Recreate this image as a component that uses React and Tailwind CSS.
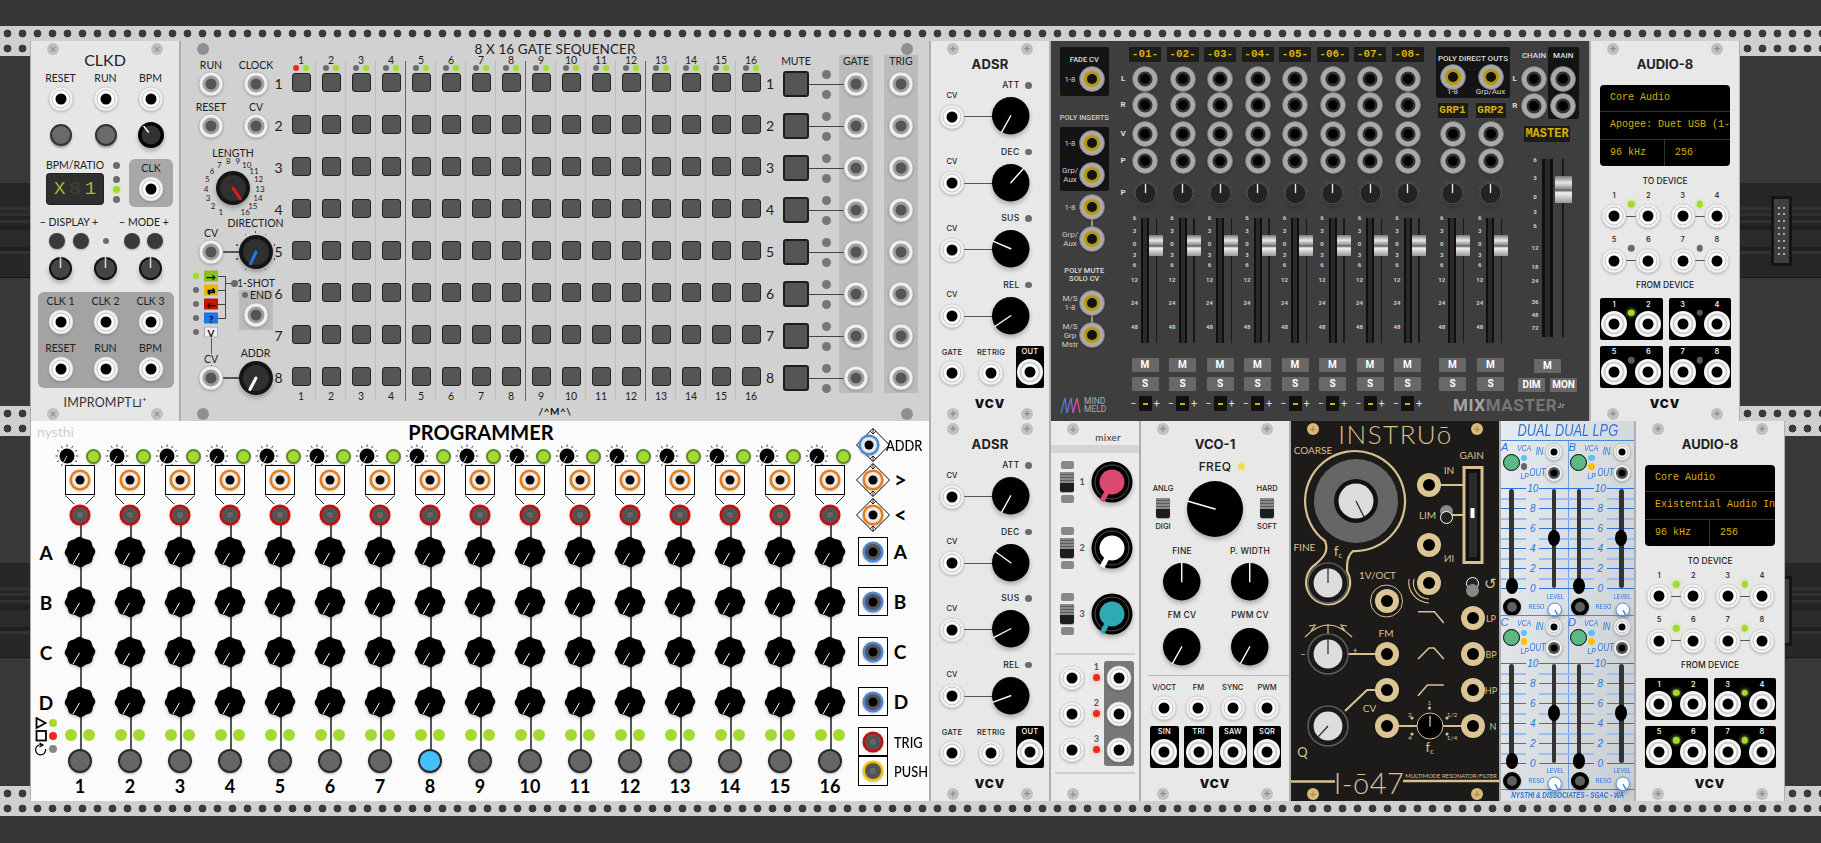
import React from 'react';

// Absolute helpers: only for panel artwork and controls with a free position on a faceplate.
const CENTER = 'absolute -translate-x-1/2 -translate-y-1/2';

const T = ({ x, y, className = '', children }) => (
  <div className={`${CENTER} whitespace-nowrap leading-none ${className}`} style={{ left: x, top: y }}>
    {children}
  </div>
);

const Box = ({ x, y, w, h, className = '', children }) => (
  <div className={`absolute ${className}`} style={{ left: x, top: y, width: w, height: h }}>
    {children}
  </div>
);

const L = ({ className = '', children }) => <span className={`whitespace-nowrap leading-none ${className}`}>{children}</span>;

const Dot = ({ x, y, d = 7, className = 'bg-[#6b6b6b]' }) => (
  <div
    className={`shrink-0 rounded-full ${x === undefined ? '' : 'absolute'} ${className}`}
    style={x === undefined ? { width: d, height: d } : { width: d, height: d, left: x - d / 2, top: y - d / 2 }}
  />
);

const JACKS = {
  vcv: [[12, '#f3f3f3', '#cdcdcd'], [9, '#fbfbfb', '#b5b5b5'], [5.5, '#000']],
  seq: [[12, '#f0f0f0', '#b5b5b5'], [8.5, '#a0a0a0'], [5.5, '#555']],
  out: [[13, '#f7f7f7'], [10.5, '#cfcfcf'], [8.5, '#fbfbfb'], [5.5, '#000']],
  mm: [[12.5, '#a9a9a9', '#777'], [7.5, '#333'], [5, '#000']],
  mmy: [[12.5, '#a9a9a9', '#777'], [8, '#b39a00'], [5, '#111']],
  orange: [[10.5, '#ec7c12'], [8, '#e8e8e8'], [4.5, '#000']],
  red: [[10.5, '#cc0a0a'], [8, '#555'], [4, '#666', '#444']],
  blue: [[10.5, '#4f86d6'], [8, '#555'], [4.5, '#000']],
  blueT: [[10.5, '#4f86d6'], [8, '#e8e8e8'], [4.5, '#000']],
  yellow: [[10.5, '#f2c200'], [8, '#555'], [4, '#666', '#444']],
  cream: [[12, '#dcc595'], [6, '#000']],
  lpg: [[8.5, '#f0f0f0', '#bbb'], [6, '#fafafa', '#aaa'], [3.5, '#000']],
  lpgOut: [[8.5, '#f0f0f0', '#bbb'], [6, '#555'], [3.5, '#000']],
  lpgBig: [[9, '#000'], [5, '#5e5e5e']],
};

const Jack = ({ x, y, type = 'vcv' }) => (
  <svg
    width="28"
    height="28"
    viewBox="-14 -14 28 28"
    className={`${x === undefined ? 'block shrink-0' : CENTER} drop-shadow-[0_1.5px_1px_rgba(0,0,0,0.22)]`}
    style={x === undefined ? undefined : { left: x, top: y }}
  >
    {JACKS[type].map(([r, fill, stroke], i) => (
      <circle key={i} r={r} fill={fill} stroke={stroke || 'none'} strokeWidth="0.8" />
    ))}
  </svg>
);

const polar = (r, deg) => [r * Math.sin((deg * Math.PI) / 180), -r * Math.cos((deg * Math.PI) / 180)];

// angle is clockwise from straight up
const Knob = ({ x, y, d = 38, angle = 0, fill = '#000', inner, rim, color = '#fff', w = 1.4, from = 0, to, children }) => {
  const r = d / 2;
  const [x1, y1] = polar(from, angle);
  const [x2, y2] = polar(to ?? r, angle);
  return (
    <svg
      width={d + 4}
      height={d + 4}
      viewBox={`${-r - 2} ${-r - 2} ${d + 4} ${d + 4}`}
      className={`${x === undefined ? 'block shrink-0' : CENTER} drop-shadow-[0_3px_2px_rgba(0,0,0,0.25)]`}
      style={x === undefined ? undefined : { left: x, top: y }}
    >
      <circle r={r} fill={fill} stroke={rim || 'none'} strokeWidth="1" />
      {inner && <circle r={inner[0]} fill={inner[1]} />}
      <line x1={x1} y1={y1} x2={x2} y2={y2} stroke={color} strokeWidth={w} strokeLinecap="round" />
      {children}
    </svg>
  );
};

const Screw = ({ mark = '+', tone = 'gray' }) => (
  <div className={`flex h-[12px] w-[12px] shrink-0 items-center justify-center rounded-full text-[11px] font-bold leading-none ${tone === 'gold' ? 'bg-[#d8ba78] text-[#a88a48]' : 'bg-[#c0c0c0] text-[#8f8f8f]'}`}>
    {mark}
  </div>
);

const ScrewRow = ({ mark, tone, children }) => (
  <div className="flex h-[15px] shrink-0 items-center justify-between px-[16px]">
    <Screw mark={mark} tone={tone} />
    {children}
    <Screw mark={mark} tone={tone} />
  </div>
);

// bottom of a faceplate: two screws with the maker's logo between them
const ModuleFoot = ({ mark, tone, children }) => (
  <div className="mt-auto flex h-[33px] shrink-0 items-end justify-between px-[16px] pb-[1.5px]">
    <Screw mark={mark} tone={tone} />
    {children}
    <Screw mark={mark} tone={tone} />
  </div>
);

const Toggle = () => (
  <div className="flex h-[20px] w-[14px] shrink-0 flex-col overflow-hidden rounded-[2px] bg-[#1d1d1d] shadow-[0_1px_1px_rgba(0,0,0,0.3)]">
    <div className="h-[11px] bg-[repeating-linear-gradient(#8a8a8a_0px,#8a8a8a_2px,#5a5a5a_2px,#5a5a5a_3px)]" />
  </div>
);

const Rail = ({ className = '' }) => (
  <div className={`h-[15px] shrink-0 bg-[#cfcfcf] bg-[radial-gradient(circle,#3a3a3a_3.6px,transparent_4.2px)] bg-[length:15px_15px] ${className}`} />
);

const STRIPES = [
  ['h-[24px]', 'bg-[#262626]'], ['h-[3px]', 'bg-[#313131]'], ['h-[3px]', 'bg-[#282828]'], ['h-[3px]', 'bg-[#303030]'],
  ['h-[4px]', 'bg-[#232323]'], ['h-[3px]', 'bg-[#303030]'], ['h-[3px]', 'bg-[#242424]'], ['h-[4px]', 'bg-[#1f1f1f]'],
  ['h-[18px]', 'bg-[#2a2a2a]'], ['h-[4px]', 'bg-[#1f1f1f]'], ['h-[3px]', 'bg-[#343434]'], ['h-[23px]', 'bg-[#272727]'],
];

// empty part of a rack row: rails and the dark backplane
const BlankSlot = ({ className = '', connector }) => (
  <div className={`relative flex flex-col overflow-hidden ${className}`}>
    <Rail />
    <div className="flex-1 bg-[#383838]">
      <div className="relative mt-[127px] flex h-[95px] flex-col border-b border-[#161616]">
        {STRIPES.map(([h, c], i) => (
          <div key={i} className={`${h} ${c}`} />
        ))}
        {connector && (
          <div className={`absolute top-[13px] grid h-[70px] w-[21px] grid-cols-2 content-evenly justify-items-center border-[3px] border-[#141414] bg-[#3f3f3f] p-[3px] ${connector}`}>
            {Array.from({ length: 16 }).map((_, i) => (
              <div key={i} className="h-[2px] w-[2px] bg-[#aaa]" />
            ))}
          </div>
        )}
      </div>
    </div>
    <Rail />
  </div>
);

const Module = ({ className, children }) => (
  <div className={`relative flex h-full shrink-0 flex-col overflow-hidden border-x border-[#aeaeae] ${className}`}>{children}</div>
);

const VcvLogo = () => <L className="mt-[10px] self-start text-[12px] font-black tracking-[1px] text-[#111]">VCV</L>;

const vcvFont = "font-['Inter',sans-serif]";

/* ---------- CLKD ---------- */
const Clkd = () => (
  <Module className="w-[150px] bg-[#e6e6e6] font-['Lato',sans-serif] text-[10.5px] text-[#222]">
    <ScrewRow mark="×" />
    <div className="flex h-[8px] items-center justify-center">
      <L className="text-[16px]">CLKD</L>
    </div>
    <div className="ml-[7px] mt-[7px] grid grid-cols-[repeat(3,45px)] grid-rows-[14px_28px_44px] place-items-center">
      {['RESET', 'RUN', 'BPM'].map((l) => (
        <L key={l}>{l}</L>
      ))}
      <Jack />
      <Jack />
      <Jack />
      <Dot d={22} className="border-2 border-[#333] bg-[#6a6a6a] shadow-[0_2px_2px_rgba(0,0,0,0.3)]" />
      <Dot d={22} className="border-2 border-[#333] bg-[#6a6a6a] shadow-[0_2px_2px_rgba(0,0,0,0.3)]" />
      <Knob d={26} angle={-40} inner={[9.5, '#333']} from={4} to={11} w={1.5} />
    </div>
    <div className="flex h-[54px] pl-[16px]">
      <div className="flex w-[56px] flex-col">
        <div className="flex h-[16px] items-center justify-center">
          <L>BPM/RATIO</L>
        </div>
        <div className="mt-px flex h-[30px] items-center justify-center gap-[4px] rounded-[3px] bg-[#2f2f2f] font-['Liberation_Mono',monospace] text-[19px] leading-none text-[#a0b92c] shadow-[0_0_0_1px_#222]">
          <span>X</span>
          <span className="text-[#40442e]">8</span>
          <span>1</span>
        </div>
      </div>
      <div className="ml-[10px] mt-[4.5px] flex flex-col gap-[3px]">
        <Dot className="mb-[4px] bg-[#6b6b6b]" />
        <Dot />
        <Dot className="bg-[#a4d92f] shadow-[0_0_4px_#bce25a]" />
        <Dot />
      </div>
      <div className="ml-[9px] mt-[2px] grid h-[48px] w-[44px] grid-rows-[18px_24px] place-items-center rounded-[6px] bg-[#a8a8a8]">
        <L>CLK</L>
        <Jack />
      </div>
    </div>
    <div className="grid h-[22px] grid-cols-[76px_74px] place-items-center">
      <L>− DISPLAY +</L>
      <L>− MODE +</L>
    </div>
    <div className="ml-[13.7px] grid h-[12px] grid-cols-[24px_24px_26px_26px_20.6px] place-items-center">
      <Dot d={16} className="bg-[#3a3a3a] shadow-[0_1px_2px_rgba(0,0,0,0.3)]" />
      <Dot d={16} className="bg-[#3a3a3a] shadow-[0_1px_2px_rgba(0,0,0,0.3)]" />
      <Dot d={6} />
      <Dot d={16} className="bg-[#3a3a3a] shadow-[0_1px_2px_rgba(0,0,0,0.3)]" />
      <Dot d={16} className="bg-[#3a3a3a] shadow-[0_1px_2px_rgba(0,0,0,0.3)]" />
    </div>
    <div className="ml-[7px] grid h-[46px] grid-cols-[repeat(3,45px)] place-items-center">
      {[0, 1, 2].map((i) => (
        <Knob key={i} d={23} fill="#111" inner={[9.5, '#454545']} color="#d5d5d5" from={1} to={11} w={1.6} />
      ))}
    </div>
    <div className="ml-[7px] mt-px grid h-[96px] w-[136px] grid-cols-[repeat(3,45px)] grid-rows-[18px_24px_28px_14px] place-items-center rounded-[6px] bg-[#a3a3a3]">
      {['CLK 1', 'CLK 2', 'CLK 3'].map((l) => (
        <L key={l}>{l}</L>
      ))}
      <Jack />
      <Jack />
      <Jack />
      {['RESET', 'RUN', 'BPM'].map((l) => (
        <L key={l}>{l}</L>
      ))}
      <Jack />
      <Jack />
      <Jack />
    </div>
    <ModuleFoot mark="×">
      <L className="mt-[9px] self-start text-[12.5px] tracking-[0.2px] text-[#333]">IMPROMPT⊔⁺</L>
    </ModuleFoot>
  </Module>
);

/* ---------- 8 x 16 gate sequencer ---------- */
const STEPS = Array.from({ length: 16 }, (_, i) => i);
const EIGHT = Array.from({ length: 8 }, (_, i) => i);

const SeqKnob = ({ x, y, angle, color, ticks }) => (
  <>
    <Knob x={x} y={y} d={34} fill="#151515" inner={[13, '#303030']} color={color} w={3} to={13} angle={angle} />
    {ticks &&
      [-150, -110, -70, -30, 0, 30, 70, 110, 150].map((a) => {
        const [px, py] = polar(20, a);
        return <Dot key={a} x={x + px} y={y + py} d={1.5} className="bg-[#333]" />;
      })}
  </>
);

const StepColumn = ({ i }) => (
  <div className="relative flex w-[30px] flex-col items-center">
    {i < 15 && <div className={`absolute right-0 top-[6px] bottom-0 ${(i + 1) % 4 === 0 ? 'w-[1.5px] bg-[#666]' : 'w-px bg-[#bdbdbd]'}`} />}
    <div className="flex h-[12px] items-center">
      <L className="text-[10.5px]">{i + 1}</L>
    </div>
    <div className="flex h-[4px] items-center gap-[4px]">
      <Dot d={6} className={i === 0 ? 'bg-[#f0291c]' : 'bg-[#6b6b6b]'} />
      <Dot d={6} className="bg-[#a4d92f] shadow-[0_0_3px_#c5e86d]" />
    </div>
    <div className="mt-[3.5px] flex flex-col gap-[23px]">
      {EIGHT.map((r) => (
        <div key={r} className="h-[19px] w-[19px] rounded-[3px] border-[1.5px] border-[#222] bg-[#555]" />
      ))}
    </div>
    <L className="mt-[5px] text-[10.5px]">{i + 1}</L>
  </div>
);

const SeqRows = ({ className = '', children }) => (
  <div className={`grid grid-rows-[repeat(8,42px)] place-items-center ${className}`}>{EIGHT.map(children)}</div>
);

const DIR_BUTTONS = [
  ['→', 'bg-[#8fbc1f] text-black'],
  ['⇄', 'bg-[#e6b800] text-black'],
  ['←', 'bg-[#c41500] text-black'],
  ['?', 'bg-[#1f74e8] text-black'],
  ['V', 'bg-[#f0f0f0] text-[#222] border border-[#aaa]'],
];

const SeqLeftPanel = () => (
  <div className="relative w-[90px] shrink-0 text-[10.5px]">
    <div className="ml-[7.5px] mt-[3px] grid grid-cols-[repeat(2,45px)] grid-rows-[14px_24px_22px_16px] place-items-center">
      <L>RUN</L>
      <L>CLOCK</L>
      <Jack type="seq" />
      <Jack type="seq" />
      <L>RESET</L>
      <L>CV</L>
      <Jack type="seq" />
      <Jack type="seq" />
    </div>
    {/* dials and the direction selector sit freely on the panel; coordinates are from the module's top */}
    <div className="absolute -top-[14px] left-0">
      <T x={52} y={112}>LENGTH</T>
      {STEPS.map((i) => {
        const [px, py] = polar(27, 207 + i * 20.4);
        return <T key={i} x={52 + px} y={147 + py} className="text-[8px]">{i + 1}</T>;
      })}
      <SeqKnob x={52} y={147} angle={146} color="#e81b12" />
      <Box x={30} y={210.3} w={44} h={1.5} className="bg-[#555]" />
      <T x={74.6} y={182}>DIRECTION</T>
      <T x={30} y={192}>CV</T>
      <Jack x={30} y={211} type="seq" />
      <SeqKnob x={74.6} y={211} angle={205} color="#1f74e8" ticks />
      <Box x={30} y={234.5} w={15} h={43} className="border-r-[1.5px] border-[#444]" />
      {[235, 249, 263, 277].map((y) => (
        <Box key={y} x={30} y={y - 0.5} w={15} h={1.5} className="bg-[#444]" />
      ))}
      <Box x={45} y={241.5} w={8} h={1.5} className="bg-[#444]" />
      <Dot x={53} y={242} d={7} />
      <T x={75} y={242}>1-SHOT</T>
      {DIR_BUTTONS.map(([g, c], i) => (
        <React.Fragment key={g}>
          <Dot x={15} y={235 + 14 * i} d={6} className={i === 0 ? 'bg-[#a4d92f] shadow-[0_0_4px_#bce25a]' : 'bg-[#6b6b6b]'} />
          <T x={30} y={235 + 14 * i} className={`flex h-[11px] w-[14px] items-center justify-center text-[10px] font-bold ${c}`}>{g}</T>
        </React.Fragment>
      ))}
      <Box x={58} y={249} w={34} h={40} className="bg-[#bbb]" />
      <Dot x={64} y={254} d={6} />
      <T x={80} y={254}>END</T>
      <Jack x={74.6} y={274} type="seq" />
      <Box x={29.5} y={297} w={1.5} h={30} className="bg-[#555]" />
      <T x={30} y={318} className="bg-[#d1d1d1]">CV</T>
      <Box x={30} y={336.3} w={44} h={1.5} className="bg-[#555]" />
      <Jack x={30} y={337} type="seq" />
      <T x={74.6} y={312}>ADDR</T>
      <SeqKnob x={74.6} y={337} angle={208} color="#fff" />
    </div>
  </div>
);

const OutColumn = ({ label, className }) => (
  <div className={`flex w-[34px] flex-col items-center self-start bg-[#bbb] ${className}`}>
    <div className="h-[8px]">
      <L className="mt-[1px] block text-[10.5px]">{label}</L>
    </div>
    <div className="h-[330px]">
      <SeqRows>
        {(r) => <Jack key={r} type="seq" />}
      </SeqRows>
    </div>
  </div>
);

const Sequencer = () => (
  <Module className="w-[750px] bg-[#d1d1d1] font-['Lato',sans-serif] text-[#222]">
    <div className="flex h-[15px] shrink-0 items-center justify-between px-[16px]">
      <Dot d={12} className="bg-[#8f8f8f]" />
      <L className="mt-[3px] text-[13.5px] tracking-[0.1px]">8 X 16 GATE SEQUENCER</L>
      <Dot d={12} className="bg-[#8f8f8f]" />
    </div>
    <div className="-mt-px flex h-[346px]">
      <SeqLeftPanel />
      <SeqRows className="mt-[8px] w-[15px] !place-items-[center_end]">
        {(r) => <L key={r} className="text-[14px]">{r + 1}</L>}
      </SeqRows>
      {STEPS.map((i) => (
        <StepColumn key={i} i={i} />
      ))}
      <SeqRows className="mt-[8px] w-[8px]">
        {(r) => <L key={r} className="text-[14px]">{r + 1}</L>}
      </SeqRows>
      <div className="w-[44px]">
        <div className="flex h-[8px] justify-center">
          <L className="mt-px text-[10.5px]">MUTE</L>
        </div>
        <SeqRows>
          {(r) => (
            <div key={r} className="relative h-[26px] w-[26px] rounded-[3px] border-2 border-[#1e1e1e] bg-[#555]">
              <div className="absolute left-[24px] top-[10.5px] h-[1.5px] w-[35px] bg-[#444]" />
            </div>
          )}
        </SeqRows>
      </div>
      <SeqRows className="mt-[8px] w-[16px]">
        {(r) => (
          <div key={r} className="flex flex-col gap-[11px]">
            <Dot d={9} className="bg-[#777]" />
            <Dot d={9} className="bg-[#777]" />
          </div>
        )}
      </SeqRows>
      <OutColumn label="GATE" className="ml-[5px]" />
      <OutColumn label="TRIG" className="ml-[11px]" />
    </div>
    <div className="flex h-[20px] items-end justify-between px-[16px] pb-[1.5px]">
      <Dot d={12} className="bg-[#8f8f8f]" />
      <L className="self-start mt-[5px] text-[10px] font-bold tracking-[0.5px] text-[#111]">/^M^\</L>
      <Dot d={12} className="bg-[#8f8f8f]" />
    </div>
  </Module>
);

/* ---------- ADSR ---------- */
const PortTile = ({ label }) => (
  <div className="grid h-[42px] grid-rows-[12px_28px] place-items-center rounded-[2px] bg-black text-white">
    <L className="text-[7.5px] font-medium tracking-[0.2px]">{label}</L>
    <Jack type="out" />
  </div>
);

const PortCell = ({ label, className = '' }) => (
  <div className={`grid grid-rows-[13px_28px] place-items-center ${className}`}>
    <L className="text-[7.5px] font-medium tracking-[0.2px]">{label}</L>
    <Jack />
  </div>
);

const Adsr = ({ angles }) => (
  <Module className={`w-[120px] bg-[#e8e8e8] text-[#222] ${vcvFont}`}>
    <ScrewRow />
    <div className="flex h-[18px] items-center justify-center">
      <L className="text-[13px] font-bold tracking-[0.2px]">ADSR</L>
    </div>
    <div className="mt-[2px] flex flex-col">
      {['ATT', 'DEC', 'SUS', 'REL'].map((l, i) => (
        <div key={l} className="relative flex h-[66.5px]">
          <div className="absolute left-[33px] top-[40.5px] h-px w-[30px] bg-[#555]" />
          <div className="grid w-[42px] grid-rows-[14px_28px] place-items-center pt-[13px]">
            <L className="text-[7.5px] font-medium">CV</L>
            <Jack />
          </div>
          <div className="grid w-[77px] grid-rows-[20px_41px]">
            <div className="flex items-center justify-end gap-[5.5px] pr-[17.5px]">
              <L className="text-[8.5px] font-medium tracking-[0.3px]">{l}</L>
              <Dot d={6.5} />
            </div>
            <div className="flex items-center justify-center">
              <Knob d={37.5} angle={angles[i]} />
            </div>
          </div>
        </div>
      ))}
    </div>
    <div className="flex pt-[4.5px]">
      <PortCell label="GATE" className="w-[42px]" />
      <PortCell label="RETRIG" className="w-[36px]" />
      <div className="ml-[7px] w-[28px]">
        <PortTile label="OUT" />
      </div>
    </div>
    <ModuleFoot>
      <VcvLogo />
    </ModuleFoot>
  </Module>
);

/* ---------- MixMaster Jr ---------- */
const CHANNELS = ['-01-', '-02-', '-03-', '-04-', '-05-', '-06-', '-07-', '-08-'];
const DB = [['6', 0], ['3', 13], ['0', 26], ['3', 37], ['6', 47], ['12', 62], ['24', 85], ['48', 109]];
const MASTER_DB = [['6', 1], ['3', 19], ['0', 38], ['3', 53], ['6', 67], ['12', 89], ['18', 108], ['24', 122], ['36', 143], ['48', 156], ['72', 169]];
const HANDLE = 'bg-[linear-gradient(#777,#e8e8e8_25%,#8a8a8a_48%,#555_52%,#f2f2f2_62%,#999)]';
const LCD = "flex items-center justify-center rounded-[1px] bg-[#1c1c1c] font-['Liberation_Mono',monospace] font-bold text-[#d8b100]";

const Fader = () => (
  <div className="relative h-[125px] w-full">
    <div className="absolute left-[14.75px] top-0 h-full w-[8px] border-x-[2.5px] border-[#0f0f0f] bg-[#2a2a2a]" />
    <div className="absolute left-[29.25px] top-0 h-full w-[1.5px] bg-[#1a1a1a]" />
    {DB.map(([l, y], i) => (
      <T key={i} x={8.25} y={y} className="text-[6px] font-bold text-[#cfcfcf]">{l}</T>
    ))}
    <div className={`absolute left-[22.75px] top-[17px] h-[21px] w-[14px] rounded-[1px] ${HANDLE}`} />
  </div>
);

const MmBtn = ({ children, className = '' }) => (
  <div className={`flex h-[14px] w-[27px] shrink-0 items-center justify-center rounded-[1px] bg-[#686868] text-[10px] font-bold leading-none text-white ${className}`}>
    {children}
  </div>
);

const Pan = () => (
  <Knob d={21} fill="#232323" rim="#555" color="#e8e8e8" w={1.4} from={1} to={9}>
    <circle r="12.5" fill="none" stroke="#777" strokeWidth="1" strokeDasharray="0.8 2" />
  </Knob>
);

const StripLower = () => (
  <>
    <Fader />
    <MmBtn className="mt-[15.3px]">M</MmBtn>
    <MmBtn className="mt-[4.7px]">S</MmBtn>
  </>
);

const ChannelStrip = ({ label }) => (
  <div className="flex w-[37.5px] flex-col items-center pt-[6px]">
    <div className={`h-[15px] w-[32px] text-[11px] ${LCD}`}>{label}</div>
    <div className="grid w-full grid-rows-[33.4px_19.8px_37.6px_15.8px_49.4px] place-items-center">
      <Jack type="mm" />
      <Jack type="mm" />
      <Jack type="mm" />
      <Jack type="mm" />
      <Pan />
    </div>
    <StripLower />
    <div className="mt-[5.5px] flex items-center gap-[2px] text-[11px] leading-none">
      <span>−</span>
      <div className="flex h-[15px] w-[13px] items-center justify-center rounded-[1px] bg-[#111]">
        <div className="h-[2px] w-[5px] bg-[#d8b100]" />
      </div>
      <span>+</span>
    </div>
  </div>
);

const GroupStrip = ({ label }) => (
  <div className="flex w-[38px] flex-col items-center">
    <div className={`h-[15px] w-[30px] text-[11px] ${LCD}`}>{label}</div>
    <div className="grid w-full grid-rows-[32px_21.4px_44.6px] place-items-center">
      <Jack type="mm" />
      <Jack type="mm" />
      <Pan />
    </div>
    <div className="mt-[2px] flex w-full flex-col items-center">
      <StripLower />
    </div>
  </div>
);

const PortRow = ({ label, label2, label3, type = 'mmy' }) => (
  <div className="grid h-[32px] grid-cols-[20px_23px] place-items-center text-center text-[8px] leading-[9px] text-[#cfcfcf]">
    <div>
      {label}
      {label2 && <br />}
      {label2}
      {label3 && <br />}
      {label3}
    </div>
    <Jack type={type} />
  </div>
);

const MixLeftColumn = () => (
  <div className="flex w-[62px] shrink-0 flex-col pl-[9px]">
    <div className="mt-[6px] h-[49px] w-[48.5px] rounded-[2px] bg-[#141414]">
      <div className="flex h-[16px] items-end justify-center">
        <L className="text-[7.5px] font-medium">FADE CV</L>
      </div>
      <PortRow label="1-8" />
    </div>
    <div className="flex h-[31px] w-[48.5px] items-end justify-center pb-[6px]">
      <L className="text-[7.5px] font-medium text-[#ccc]">POLY INSERTS</L>
    </div>
    <div className="h-[64px] w-[48.5px] rounded-[2px] bg-[#141414]">
      <PortRow label="1-8" />
      <PortRow label="Grp/" label2="Aux" />
    </div>
    <div className="relative">
      <div className="absolute left-[31px] top-[16px] h-[32px] w-[1.5px] bg-[#999]" />
      <PortRow label="1-8" />
      <PortRow label="Grp/" label2="Aux" />
    </div>
    <div className="flex h-[32px] w-[48.5px] items-center justify-center pt-[8px] text-center text-[7.5px] font-medium leading-[8.5px]">
      POLY MUTE
      <br />
      SOLO CV
    </div>
    <div className="relative">
      <div className="absolute left-[31px] top-[16px] h-[32px] w-[1.5px] bg-[#999]" />
      <PortRow label="M/S" label2="1-8" />
      <PortRow label="M/S" label2="Grp" label3="Mstr" />
    </div>
    <div className="mt-[46px] flex items-center gap-[2px]">
      <svg width="22" height="16" viewBox="0 0 22 16" fill="none" strokeWidth="1.3" className="shrink-0">
        <path d="M1 16 L5 1 L7 16" stroke="#4a7fe0" />
        <path d="M7 16 L11 1 L13 16" stroke="#8a5fd8" />
        <path d="M13 16 L17 1 L20 16" stroke="#e0508c" />
      </svg>
      <div className="text-[8.5px] leading-[8px] text-[#aaa]">
        MIND
        <br />
        MELD
      </div>
    </div>
  </div>
);

const MixMaster = () => (
  <Module className="w-[540px] !flex-row border-[#555] bg-[#3e3e3e] font-['Roboto',sans-serif] text-[#ddd]">
    <MixLeftColumn />
    <div className="w-[13.25px] shrink-0 pl-[7px] pt-[21px]">
      <div className="grid grid-rows-[33.4px_19.8px_37.6px_15.8px_49.4px] place-items-center text-[8px] font-bold">
        {['L', 'R', 'V', 'P', 'P'].map((l, i) => (
          <L key={i}>{l}</L>
        ))}
      </div>
    </div>
    {CHANNELS.map((c) => (
      <ChannelStrip key={c} label={c} />
    ))}
    <div className="ml-[7.25px] flex w-[76px] shrink-0 flex-col pt-[6px]">
      <div className="ml-[2.5px] grid h-[51px] w-[74px] grid-rows-[16px_24px_10px] rounded-[2px] bg-[#141414]">
        <div className="flex items-end justify-center">
          <L className="text-[8px] font-medium">POLY DIRECT OUTS</L>
        </div>
        <div className="-ml-[2.5px] grid grid-cols-[38px_38px] place-items-center">
          <Jack type="mmy" />
          <Jack type="mmy" />
        </div>
        <div className="-ml-[2.5px] grid grid-cols-[38px_38px] place-items-center text-[8px]">
          <L>1-8</L>
          <L>Grp/Aux</L>
        </div>
      </div>
      <div className="mt-[5px] flex">
        <GroupStrip label="GRP1" />
        <GroupStrip label="GRP2" />
      </div>
    </div>
    <div className="flex w-[70px] shrink-0 flex-col pt-[6px]">
      <div className="flex">
        <div className="grid w-[10.5px] grid-rows-[18px_27.7px_26.6px] place-items-center text-[8px] font-bold">
          <span />
          <L>L</L>
          <L>R</L>
        </div>
        <div className="grid w-[20px] grid-rows-[18px_27.7px_26.6px] place-items-center">
          <L className="text-[8px] font-medium">CHAIN</L>
          <Jack type="mm" />
          <Jack type="mm" />
        </div>
        <div className="ml-[7.5px] grid h-[72px] w-[31.5px] grid-rows-[18px_27.7px_26.6px] place-items-center rounded-[2px] bg-[#141414]">
          <L className="text-[8px] font-medium">MAIN</L>
          <Jack type="mm" />
          <Jack type="mm" />
        </div>
      </div>
      <div className={`ml-[14.5px] mt-[6.7px] h-[16px] w-[46px] text-[12px] ${LCD}`}>MASTER</div>
      <div className="relative mt-[17px] h-[178px]">
        <div className="absolute left-[32.5px] top-0 h-full w-[11px] border-x-[3px] border-[#0f0f0f] bg-[#2a2a2a]" />
        <div className="absolute left-[52.5px] top-0 h-full w-[1.5px] bg-[#1a1a1a]" />
        {MASTER_DB.map(([l, y], i) => (
          <T key={i} x={25.5} y={y} className="text-[6px] font-bold text-[#cfcfcf]">{l}</T>
        ))}
        <div className={`absolute left-[45px] top-[17px] h-[27px] w-[17px] rounded-[1px] ${HANDLE}`} />
      </div>
      <MmBtn className="ml-[24.5px] mt-[22px]">M</MmBtn>
      <div className="ml-[8.5px] mt-[4.7px] flex gap-[5px]">
        <MmBtn>DIM</MmBtn>
        <MmBtn>MON</MmBtn>
      </div>
    </div>
    <T x={458} y={364} className="text-[17px] font-bold tracking-[0.6px] text-[#777]">
      <span className="text-[#a5a5a5]">MIX</span>MASTER<sup className="text-[7px] text-[#a5a5a5]">Jr</sup>
    </T>
  </Module>
);

/* ---------- AUDIO-8 ---------- */
const LED_ON = 'bg-[#a4d92f] shadow-[0_0_4px_#bce25a]';

const ToPair = ({ a, on }) => (
  <div className="relative grid grid-cols-[34.3px_34.3px] grid-rows-[13.4px_28px] justify-center justify-items-center items-center">
    <div className="absolute left-1/2 top-[15px] -translate-x-1/2 -translate-y-1/2">
      <Dot d={6.5} className={on ? LED_ON : 'bg-[#6b6b6b]'} />
    </div>
    <div className="absolute left-[26px] top-[27px] h-px w-[11px] bg-[#555]" />
    <L className="text-[7.5px] font-medium">{a}</L>
    <L className="text-[7.5px] font-medium">{a + 1}</L>
    <Jack />
    <Jack />
  </div>
);

const FromPair = ({ a, on }) => (
  <div className="relative grid h-[42px] grid-cols-[34.3px_34.3px] grid-rows-[12px_28px] content-start justify-center justify-items-center items-center rounded-[2px] bg-black text-white">
    <div className="absolute left-1/2 top-[14.3px] -translate-x-1/2 -translate-y-1/2">
      <Dot d={6.5} className={on ? LED_ON : 'bg-[#5a5a5a]'} />
    </div>
    <L className="text-[7.5px] font-medium">{a}</L>
    <L className="text-[7.5px] font-medium">{a + 1}</L>
    <Jack type="out" />
    <Jack type="out" />
  </div>
);

const Audio8 = ({ device, toOn, fromOn }) => (
  <Module className={`w-[150px] bg-[#e8e8e8] text-[#222] ${vcvFont}`}>
    <ScrewRow />
    <div className="flex h-[18px] items-center justify-center">
      <L className="text-[13px] font-bold">AUDIO-8</L>
    </div>
    <div className="mx-[9px] mt-[11px] grid h-[82px] grid-rows-[27px_28px_27px] overflow-hidden rounded-[4px] bg-black font-['Liberation_Mono',monospace] text-[10px] leading-none text-[#d8ae00]">
      <div className="flex items-center whitespace-nowrap border-b border-[#333] pl-[10px]">Core Audio</div>
      <div className="flex items-center whitespace-nowrap border-b border-[#333] pl-[10px]">{device}</div>
      <div className="grid grid-cols-[65px_65px]">
        <div className="flex items-center border-r border-[#333] pl-[10px]">96 kHz</div>
        <div className="flex items-center pl-[10px]">256</div>
      </div>
    </div>
    <div className="mt-[8px] flex h-[15px] items-center justify-center">
      <L className="text-[8.5px] font-medium">TO DEVICE</L>
    </div>
    <div className="grid grid-cols-[62.5px_62.5px] gap-x-[6px] gap-y-[2.8px] px-[9px]">
      {[1, 3, 5, 7].map((a, i) => (
        <ToPair key={a} a={a} on={toOn.includes(i)} />
      ))}
    </div>
    <div className="mt-[3.8px] flex h-[14px] items-center justify-center">
      <L className="text-[8.5px] font-medium">FROM DEVICE</L>
    </div>
    <div className="mt-[6px] grid grid-cols-[62.5px_62.5px] gap-x-[6px] gap-y-[5.7px] px-[9px]">
      {[1, 3, 5, 7].map((a, i) => (
        <FromPair key={a} a={a} on={fromOn.includes(i)} />
      ))}
    </div>
    <ModuleFoot>
      <VcvLogo />
    </ModuleFoot>
  </Module>
);

/* ---------- Nysthi programmer ---------- */
const SCALLOP = Array.from({ length: 96 }, (_, i) => {
  const a = (i / 96) * Math.PI * 2;
  const r = 14.6 + 0.7 * Math.cos(a * 8 + 0.4);
  return `${(r * Math.sin(a)).toFixed(2)},${(-r * Math.cos(a)).toFixed(2)}`;
}).join(' ');

const Scallop = () => {
  const [px, py] = polar(14, 210);
  const [qx, qy] = polar(1, 210);
  return (
    <svg width="32" height="32" viewBox="-16 -16 32 32" className="block drop-shadow-[0_2px_1.5px_rgba(0,0,0,0.2)]">
      <polygon points={SCALLOP} fill="#000" />
      <line x1={qx} y1={qy} x2={px} y2={py} stroke="#fff" strokeWidth="1" />
    </svg>
  );
};

const TickKnob = () => (
  <svg width="26" height="26" viewBox="-13 -13 26 26" className="block">
    {[-150, -120, -90, -60, -30, 0, 30, 60, 90, 120, 150].map((a) => {
      const [x1, y1] = polar(9, a);
      const [x2, y2] = polar(11.5, a);
      return <line key={a} x1={x1} y1={y1} x2={x2} y2={y2} stroke="#333" strokeWidth="0.9" />;
    })}
    <circle r="7.5" fill="#000" />
    <line x1="0" y1="0" x2="-3.6" y2="6.4" stroke="#fff" strokeWidth="0.8" />
  </svg>
);

const Framed = ({ type }) => (
  <div className="flex h-[29.5px] w-[29.5px] shrink-0 items-center justify-center border border-black bg-white">
    <Jack type={type} />
  </div>
);

const Diamond = ({ type }) => (
  <div className="relative flex h-[35px] w-[36px] items-center justify-center">
    <svg width="36" height="36" viewBox="-18 -18 36 36" className="absolute left-0 top-0">
      <polygon points="0,-16.5 16.5,0 0,16.5 -16.5,0" fill="#fff" stroke="#000" strokeWidth="1" />
      <path d="M0 -16.5 V-11 M0 16.5 V11 M-3 -14 L0 -11 L3 -14 M-3 14 L0 11 L3 14" stroke="#000" strokeWidth="0.8" fill="none" />
    </svg>
    <div className="relative">
      <Jack type={type} />
    </div>
  </div>
);

const ProgramStep = ({ i }) => (
  <div className="relative isolate flex w-[50px] flex-col items-center">
    <div className="absolute left-1/2 top-[72px] -z-10 h-[246px] w-[1.5px] bg-[#555]" />
    <div className="grid h-[22px] grid-cols-[26px_26px] place-items-center">
      <TickKnob />
      <Dot d={15} className="border-2 border-[#5b8a2a] bg-[#a4d92f] shadow-[0_1px_2px_rgba(0,0,0,0.25)]" />
    </div>
    <div className="mt-[0.3px]">
      <Framed type="orange" />
    </div>
    <svg width="30" height="10" viewBox="0 0 30 10" className="block shrink-0">
      <path d="M0.5 0.5 L9 9 M29.5 0.5 L21 9" stroke="#111" strokeWidth="0.9" fill="none" />
    </svg>
    <div className="flex h-[20.4px] items-center">
      <Jack type="red" />
    </div>
    <div className="mt-[1.8px] grid grid-rows-[repeat(4,50px)] place-items-center">
      <Scallop />
      <Scallop />
      <Scallop />
      <Scallop />
    </div>
    <div className="flex h-[15.4px] items-center gap-[6px]">
      <Dot d={12} className="bg-[#a4d92f]" />
      <Dot d={12} className="bg-[#a4d92f]" />
    </div>
    <div className="flex h-[37.2px] items-center">
      <Dot d={24} className={`border-[2.5px] border-[#2a2a2a] shadow-[0_1px_2px_rgba(0,0,0,0.3)] ${i === 7 ? 'bg-[#45c0ff]' : 'bg-[#666]'}`} />
    </div>
    <div className="flex h-[12px] items-center">
      <L className="text-[18px] font-bold">{i + 1}</L>
    </div>
  </div>
);

const NARROW_LABEL = 'origin-left scale-x-[0.8] text-[16px] font-medium';

const Programmer = () => (
  <Module className="w-[900px] !flex-row bg-[#fbfbfb] font-['Lato',sans-serif] text-black">
    <div className="w-[824px] shrink-0">
      <div className="grid h-[22px] grid-cols-[1fr_auto_1fr] items-center pl-[76px]">
        <L className="-ml-[70px] text-[14px] text-[#d0d0d0]">nysthi</L>
        <L className="text-[20px] font-bold tracking-[0.1px]">PROGRAMMER</L>
      </div>
      <div className="flex">
        <div className="w-[24px] shrink-0 pt-[84px]">
          <div className="grid grid-rows-[repeat(4,50px)] place-items-center text-[19px] font-bold">
            {['A', 'B', 'C', 'D'].map((l) => (
              <L key={l} className="ml-[6px]">{l}</L>
            ))}
          </div>
          <div className="-mt-[10px] flex gap-[1px] pl-[4px]">
            <svg width="13" height="40" viewBox="0 0 13 40" fill="none" stroke="#000" strokeWidth="1.8" className="block shrink-0">
              <path d="M1.5 1 L10.5 6 L1.5 11 Z" />
              <rect x="1.5" y="14" width="9.5" height="9.5" />
              <path d="M10.5 32 A5 5 0 1 1 7 28 M4.5 26 L8 28 L4.5 30" strokeWidth="1.2" />
            </svg>
            <div className="flex flex-col gap-[5px] pt-[1.7px]">
              <Dot d={8} className="bg-[#a4d92f]" />
              <Dot d={8} className="bg-[#f0291c]" />
              <Dot d={8} className="bg-[#888]" />
            </div>
          </div>
        </div>
        {STEPS.map((i) => (
          <ProgramStep key={i} i={i} />
        ))}
      </div>
    </div>
    <div className="flex min-w-0 flex-col pt-[6.2px]">
      {[['blueT', 'ADDR'], ['orange', '>'], ['orange', '<']].map(([type, l]) => (
        <div key={l} className="flex items-center gap-[3px]">
          <Diamond type={type} />
          <L className={l === 'ADDR' ? NARROW_LABEL : 'text-[22px] font-bold'}>{l}</L>
        </div>
      ))}
      <div className="ml-[3.3px] mt-[4.8px] flex flex-col gap-[20.5px]">
        {['A', 'B', 'C', 'D'].map((l) => (
          <div key={l} className="flex items-center gap-[6px]">
            <Framed type="blue" />
            <L className="text-[19px] font-bold">{l}</L>
          </div>
        ))}
      </div>
      <div className="ml-[3.3px] mt-[10.5px] flex flex-col">
        {[['red', 'TRIG'], ['yellow', 'PUSH']].map(([type, l]) => (
          <div key={l} className="flex items-center gap-[6px]">
            <Framed type={type} />
            <L className={NARROW_LABEL}>{l}</L>
          </div>
        ))}
      </div>
    </div>
  </Module>
);

/* ---------- mixer ---------- */
const MIX_COLORS = ['#d94a6e', '#ffffff', '#2ea9b5'];

const Mixer = () => (
  <Module className="w-[90px] bg-[#ebebeb] font-['Lato',sans-serif] text-[#333]">
    <div className="flex h-[24px] justify-between pl-[16px]">
      <div className="mt-[1.5px]">
        <Screw />
      </div>
      <L className="mr-[18px] mt-[11px] text-[10px] tracking-[0.3px]">mixer</L>
    </div>
    <div className="h-[8px] bg-[#d5d5d5]" />
    <div className="-mt-[4.3px] flex flex-col pl-[3px]">
      {MIX_COLORS.map((c, i) => (
        <div key={c} className="grid h-[66px] grid-cols-[26px_4px_55px] place-items-center">
          <div className="flex flex-col items-center gap-[3px]">
            <div className="h-[8px] w-[13px] rounded-[2px] bg-[#888]" />
            <Toggle />
            <div className="h-[8px] w-[13px] rounded-[2px] bg-[#888]" />
          </div>
          <L className="text-[9px] font-bold text-[#555]">{i + 1}</L>
          <svg width="46" height="46" viewBox="-23 -23 46 46" className="block drop-shadow-[0_3px_2px_rgba(0,0,0,0.25)]">
            <circle r="20.5" fill="#000" />
            <circle r="17" fill="none" stroke="#777" strokeWidth="0.7" />
            <line x1="-3" y1="6" x2="-10" y2="19" stroke={c} strokeWidth="5" />
            <circle r="12.5" fill={c} />
          </svg>
        </div>
      ))}
    </div>
    <div className="mx-[4px] mt-[6px] h-[2px] bg-[#cfcfcf]" />
    <div className="mt-[5px] flex h-[112px]">
      <div className="grid h-[108px] w-[42px] grid-rows-[repeat(3,36px)] place-items-center">
        <Jack />
        <Jack />
        <Jack />
      </div>
      <div className="grid h-[108px] w-[4px] grid-rows-[repeat(3,36px)] justify-items-center">
        {[1, 2, 3].map((n) => (
          <div key={n} className="flex flex-col items-center justify-end gap-[3px] pb-[14.75px]">
            <L className="text-[9px] font-bold text-[#555]">{n}</L>
            <Dot d={6.5} className="bg-[#f0291c] shadow-[0_0_4px_#f5826f]" />
          </div>
        ))}
      </div>
      <div className="ml-[6.7px] mt-[1.7px] grid h-[104.5px] w-[30.5px] grid-rows-[repeat(3,36px)] content-center place-items-center rounded-[3px] bg-[#777]">
        <Jack />
        <Jack />
        <Jack />
      </div>
    </div>
    <div className="mx-[4px] h-[2px] bg-[#cfcfcf]" />
    <div className="mt-auto pb-[1.5px] pl-[16px]">
      <Screw />
    </div>
  </Module>
);

/* ---------- VCO-1 ---------- */
const ToggleGroup = ({ top, bottom }) => (
  <div className="flex flex-col items-center gap-[5px] pt-[10px]">
    <L className="h-[8px] text-[7.5px] font-medium">{top}</L>
    <Toggle />
    <L className="h-[8px] text-[7.5px] font-medium">{bottom}</L>
  </div>
);

const Vco = () => (
  <Module className={`w-[150px] bg-[#e8e8e8] text-[#222] ${vcvFont}`}>
    <ScrewRow />
    <div className="flex h-[18px] items-center justify-center">
      <L className="text-[13px] font-bold">VCO-1</L>
    </div>
    <div className="mt-[5px] grid h-[16px] grid-cols-[1fr_auto_1fr] items-center">
      <span />
      <L className="text-[12px] font-medium tracking-[0.3px]">FREQ</L>
      <div className="ml-[7px]">
        <Dot d={7} className="bg-[#f0dc5a] shadow-[0_0_6px_#f5ea9a]" />
      </div>
    </div>
    <div className="grid h-[70px] grid-cols-[44px_1fr_44px]">
      <ToggleGroup top="ANLG" bottom="DIGI" />
      <div className="flex items-center justify-center">
        <Knob d={56} angle={286} w={1.6} />
      </div>
      <ToggleGroup top="HARD" bottom="SOFT" />
    </div>
    <div className="grid grid-cols-[68px_68px] grid-rows-[14px_48px_19.4px_42.6px] place-items-center pl-[7px] text-[8.5px] font-medium tracking-[0.2px]">
      <L>FINE</L>
      <L>P. WIDTH</L>
      <Knob d={37.5} />
      <Knob d={37.5} />
      <L>FM CV</L>
      <L>PWM CV</L>
      <Knob d={37.5} angle={209} />
      <Knob d={37.5} angle={209} />
    </div>
    <div className="ml-[7px] mt-[7px] h-[1.5px] bg-[#bbb]" />
    <div className="grid grid-cols-[repeat(4,34.3px)] grid-rows-[23.6px_16px] place-items-center pl-[6px] text-[7.5px] font-medium">
      {['V/OCT', 'FM', 'SYNC', 'PWM'].map((l) => (
        <L key={l}>{l}</L>
      ))}
      <Jack />
      <Jack />
      <Jack />
      <Jack />
    </div>
    <div className="ml-[9px] mt-[10px] flex gap-[5.8px]">
      {['SIN', 'TRI', 'SAW', 'SQR'].map((l) => (
        <div key={l} className="w-[28.5px]">
          <PortTile label={l} />
        </div>
      ))}
    </div>
    <ModuleFoot>
      <VcvLogo />
    </ModuleFoot>
  </Module>
);

/* ---------- Instruo ---------- */
const CREAM = '#d9c08f';

const Dial = ({ x, y, r = 20, angle = 0 }) => {
  const [px, py] = polar(r * 0.72, angle);
  return (
    <svg width={r * 2 + 2} height={r * 2 + 2} viewBox={`${-r - 1} ${-r - 1} ${r * 2 + 2} ${r * 2 + 2}`} className={CENTER} style={{ left: x, top: y }}>
      <circle r={r} fill="#1a1a1a" stroke="#5a5a5a" strokeWidth="1.6" />
      <circle r={r * 0.72} fill="#dcdcdc" />
      <line x1="0" y1="0" x2={px} y2={py} stroke="#222" strokeWidth="1.2" />
    </svg>
  );
};

// the whole faceplate is one drawing with controls sitting on its lines
const Instruo = () => (
  <Module className="w-[210px] bg-[#1c1b1a] font-['Lato',sans-serif] text-[#d9c08f]">
    <svg width="210" height="380" viewBox="0 0 210 380" fill="none" stroke={CREAM} strokeWidth="2.2" className="absolute left-0 top-0">
      <path d="M34 120 A50 50 0 1 1 62 130 C56 135 56 142 56 150 A22 22 0 1 1 25 143 C33 136 38 130 34 120 Z" />
      <circle cx="65" cy="80" r="42" fill="#666" stroke="none" />
      <circle cx="65" cy="80" r="22" fill="#111" stroke="none" />
      <circle cx="65" cy="80" r="17.5" fill="#dcdcdc" stroke="none" />
      <line x1="65" y1="80" x2="74" y2="98" stroke="#222" strokeWidth="1.2" />
      <path d="M138 64 H172 M158 94 H172 M95.5 233 H37 M95.5 269 H76 L54 290 M95.5 305 H181" />
      <rect x="173" y="46.5" width="18" height="95" fill="#111" strokeWidth="3" />
      <rect x="178" y="52" width="8" height="84" fill="#2a2a2a" stroke="none" />
      <rect x="179.5" y="87" width="4" height="10" fill="#fff" stroke="none" />
      <circle cx="95.5" cy="180" r="16" strokeWidth="1" />
      <path d="M118 158 A21 21 0 0 0 138 182 M123 158 A16 16 0 0 0 138 178" strokeWidth="1.1" />
      <path d="M14 216 Q37 192 61 216 M37 203 V213 M18 205 L24 204 L20 210 M56 205 L50 204 L54 210" strokeWidth="1.2" />
      <path d="M127 190.7 H143.4 L152.8 202 M127 238 L138 227 H143 L152.8 238 M127 274.7 L136.5 264 H152.8" strokeWidth="1.6" />
      <path d="M0 360.5 H44 M112 360 H210" strokeWidth="2.4" />
      <circle cx="121" cy="297" r="1.6" fill={CREAM} stroke="none" />
      <circle cx="121" cy="313" r="1.6" fill={CREAM} stroke="none" />
      <circle cx="138.5" cy="287" r="1.6" fill={CREAM} stroke="none" />
      <circle cx="156" cy="297" r="1.6" fill={CREAM} stroke="none" />
      <circle cx="156" cy="313" r="1.6" fill={CREAM} stroke="none" />
    </svg>
    <div className="relative">
      <ScrewRow tone="gold" />
    </div>
    <T x={104.5} y={13} className="text-[26px] font-light tracking-[1.5px]">INSTRUō</T>
    <T x={22} y={29} className="text-[10px]">COARSE</T>
    <T x={13.4} y={126} className="text-[10px]">FINE</T>
    <T x={47} y={130} className="text-[14px]">f<sub className="text-[8px]">c</sub></T>
    <T x={180.7} y={34} className="text-[10px]">GAIN</T>
    <T x={158} y={49} className="text-[10px]">IN</T>
    <T x={136.5} y={94} className="text-[10px]">LIM</T>
    <T x={158} y={137} className="-scale-x-100 text-[10px]">IN</T>
    <T x={86.5} y={154} className="text-[10px]">1V/OCT</T>
    <T x={95} y={212} className="text-[10px]">FM</T>
    <T x={78.6} y={286.7} className="text-[10px]">CV</T>
    <T x={11.4} y={331} className="text-[13px]">Q</T>
    <T x={12} y={233} className="text-[9px]">−</T>
    <T x={64} y={229} className="text-[9px]">+</T>
    <Dial x={37} y={162} r={20} />
    <Dial x={37} y={233.3} r={20} />
    <Dial x={37} y={304.7} r={20} angle={222} />
    <Knob x={138.6} y={304.7} d={26} fill="#000" rim={CREAM} color="#ddd" w={1.2} to={10} />
    <T x={138.6} y={326} className="text-[13px]">f<sub className="text-[8px]">c</sub></T>
    {[[138, 64], [138, 124], [138, 161.7], [95.5, 179.7], [95.5, 233.3], [95.5, 269], [95.5, 305], [181.7, 197.3], [181.7, 233.3], [181.7, 269], [181.7, 305]].map(([x, y]) => (
      <Jack key={`${x}-${y}`} x={x} y={y} type="cream" />
    ))}
    {[['LP', 200], ['BP', 200], ['HP', 200], ['N', 202]].map(([l, x], i) => (
      <T key={l} x={x} y={[197.3, 233.3, 269, 305][i]} className="text-[9px]">{l}</T>
    ))}
    {[['1', 138.5, 282], ['2', 119, 294], ['4', 119, 317], ['1/2', 161, 294], ['1/4', 161, 317]].map(([l, x, y]) => (
      <T key={l} x={x} y={y} className="text-[6.5px]">{l}</T>
    ))}
    <Dot x={155.5} y={90} d={13} className="bg-[#888]" />
    <Dot x={155.5} y={96} d={13} className="border border-white bg-[#222]" />
    <Dot x={181.7} y={162} d={13} className="border border-white bg-[#222]" />
    <Dot x={181.7} y={169} d={13} className="bg-[#888]" />
    <T x={199.7} y={162} className="text-[15px]">↺</T>
    <T x={78} y={360.5} className="text-[29px] font-light tracking-[0.5px]">I-ō47</T>
    <T x={160} y={354.7} className="text-[6px] tracking-[-0.1px]">MULTIMODE RESONATOR/FILTER</T>
    <div className="relative mt-auto">
      <ModuleFoot tone="gold" />
    </div>
  </Module>
);

/* ---------- Dual Dual LPG ---------- */
const SCALE = [[10, 5.7], [8, 25.7], [6, 45.7], [4, 65.7], [2, 85.7], [0, 105.7]];
const BLUE = 'text-[#2f73d8]';

const LpgCell = ({ name, led, className = '' }) => (
  <div className={`relative flex h-[174px] w-[67.5px] flex-col border-r border-[#6f9fe4] ${className}`}>
    <T x={3.6} y={6} className={`text-[11px] italic ${BLUE}`}>{name}</T>
    <div className={`grid h-[42px] grid-cols-[20px_6px_18px_18px] grid-rows-[21px_21px] place-items-center ${BLUE}`}>
      <div className="row-span-2">
        <Dot d={17} className="border border-black bg-[#5cb884]" />
      </div>
      <div className="row-span-2 flex flex-col items-center gap-[2px]">
        <L className="scale-x-[0.75] text-[9px] italic">VCA</L>
        <Dot d={6.5} className="bg-[#59c3f5]" />
        <Dot d={6.5} className={led} />
        <L className="scale-x-[0.75] text-[9px] italic">LP</L>
      </div>
      <L className="ml-[6px] scale-x-[0.7] text-[11px] italic">IN</L>
      <Jack type="lpg" />
      <L className="ml-[4px] scale-x-[0.7] text-[11px] italic">OUT</L>
      <Jack type="lpgOut" />
    </div>
    <div className="relative h-[110px]">
      {SCALE.map(([n, y], i) => (
        <React.Fragment key={n}>
          <Box x={0} y={y - 1} w={25} h={1.5} className="bg-[#2f73d8]" />
          <Box x={38} y={y - 1} w={30} h={1.5} className="bg-[#2f73d8]" />
          {i < 5 && <Box x={0} y={y + 9.5} w={25} h={1.5} className="bg-[#9dbff0]" />}
          {i < 5 && <Box x={38} y={y + 9.5} w={30} h={1.5} className="bg-[#9dbff0]" />}
          <T x={31.7} y={y} className={`text-[10px] italic ${BLUE}`}>{n}</T>
        </React.Fragment>
      ))}
      <div className="absolute left-[8.3px] top-[6px] h-[99px] w-[4.5px] rounded-sm bg-[#333]" />
      <div className="absolute left-[50.5px] top-[6px] h-[99px] w-[4.5px] rounded-sm bg-[#333]" />
      <div className="absolute left-[4.5px] top-[95px] h-[16px] w-[12px] rounded-[50%] bg-black" />
      <div className="absolute left-[46.5px] top-[47px] h-[16px] w-[12px] rounded-[50%] bg-black" />
    </div>
    <div className={`grid h-[22px] grid-cols-[22px_22px_20px] items-center justify-items-center ${BLUE}`}>
      <Jack type="lpgBig" />
      <L className="ml-[4px] scale-x-[0.7] text-[8px]">RESO</L>
      <div className="flex flex-col items-center">
        <L className="-mt-[3px] scale-x-[0.7] text-[8px]">LEVEL</L>
        <Knob d={13.5} fill="#fff" rim="#4a88dd" color="#4a88dd" w={1.5} angle={150} from={1} to={7} />
      </div>
    </div>
  </div>
);

const Lpg = () => (
  <Module className="w-[135px] bg-[linear-gradient(100deg,#e6ebf0,#d7dce1_55%,#c7ccd2)] font-['Liberation_Sans',sans-serif]">
    <div className="flex h-[19px] items-center justify-center">
      <L className={`scale-x-[0.8] text-[16px] italic ${BLUE}`}>DUAL DUAL LPG</L>
    </div>
    <div className="grid grid-cols-[67.5px_67.5px] border-y border-[#4a88dd]">
      <LpgCell name="A" led="bg-[#666]" />
      <LpgCell name="B" led="bg-[#ffc107]" />
      <LpgCell name="C" led="bg-[#ffc107]" className="border-t border-t-[#4a88dd]" />
      <LpgCell name="D" led="bg-[#ffc107]" className="border-t border-t-[#4a88dd]" />
    </div>
    <div className="flex flex-1 items-center justify-center">
      <L className={`scale-x-[0.7] text-[9px] font-bold italic ${BLUE}`}>NYSTHI &amp; DISSOCIATES - SGAC - WA</L>
    </div>
  </Module>
);

export default function App() {
  return (
    <div className="flex h-[843px] w-[1821px] flex-col overflow-hidden bg-[#363636]">
      <div className="h-[26px] shrink-0" />
      <Rail />
      <div className="flex h-[380px] shrink-0">
        <BlankSlot className="w-[30px]" />
        <Clkd />
        <Sequencer />
        <Adsr angles={[209, 42, 293, 236]} />
        <MixMaster />
        <Audio8 device="Apogee: Duet USB (1-" toOn={[0, 1]} fromOn={[0]} />
        <BlankSlot className="flex-1" connector="left-[31px]" />
      </div>
      <div className="flex h-[380px] shrink-0">
        <BlankSlot className="w-[30px]" />
        <Programmer />
        <Adsr angles={[209, 306, 243, 250]} />
        <Mixer />
        <Vco />
        <Instruo />
        <Lpg />
        <Audio8 device="Existential Audio In" toOn={[0, 1, 2, 3]} fromOn={[0, 1, 2, 3]} />
        <BlankSlot className="flex-1" connector="-left-[14px]" />
      </div>
      <Rail />
    </div>
  );
}
